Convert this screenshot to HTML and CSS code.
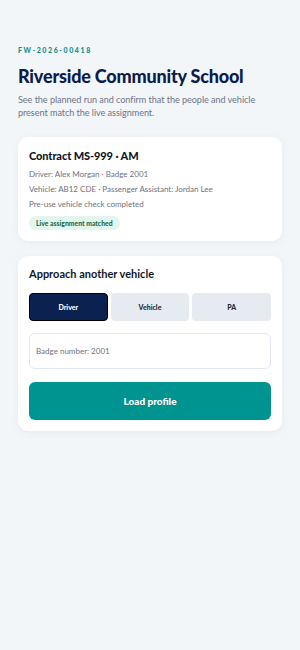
FILE: index.html
```html
<!DOCTYPE html>
<html lang="en">

<head>
    <meta charset="UTF-8">
    <meta name="viewport" content="width=device-width, initial-scale=1.0">
    <title>Vehicle check</title>
    <link rel="stylesheet" href="styles.css">
</head>

<body>
    <main class="page">
        <header class="page_head">
            <p class="ref">FW-2026-00418</p>
            <h1>Riverside Community School</h1>
            <p class="intro">See the planned run and confirm that the people and vehicle present match the live assignment.</p>
        </header>

        <section class="card run">
            <h2>Contract MS-999 · AM</h2>
            <p>Driver: Alex Morgan · Badge 2001</p>
            <p>Vehicle: AB12 CDE · Passenger Assistant: Jordan Lee</p>
            <p>Pre-use vehicle check completed</p>
            <span class="tag">Live assignment matched</span>
        </section><!-- .run end -->

        <section class="card approach">
            <h3>Approach another vehicle</h3>
            <div class="seg">
                <button class="on">Driver</button>
                <button>Vehicle</button>
                <button>PA</button>
            </div>
            <input class="field" type="text" placeholder="Badge number: 2001">
            <button class="load">Load profile</button>
        </section><!-- .approach end -->
    </main>
</body>

</html>
```
FILE: styles.css
```css
* {
    margin: 0;
    padding: 0;
    box-sizing: border-box;
}

body {
    background-color: #f3f6f9;
    font-family: "Lato", "Open Sans", sans-serif;
    color: #0c1d4a;
}

.page {
    padding: 45px 18px 40px;
}

.page_head .ref {
    font-size: 7px;
    font-weight: 900;
    letter-spacing: 1.6px;
    color: #0e8f8a;
    line-height: 10px;
}

.page_head h1 {
    margin-top: 9px;
    font-size: 18px;
    line-height: 24px;
    font-weight: 900;
    letter-spacing: -0.2px;
    color: #0c1d4a;
}

.page_head .intro {
    max-width: 248px;
    margin-top: 6px;
    font-size: 9.1px;
    line-height: 12.5px;
    letter-spacing: -0.05px;
    color: #6b7588;
}

.card {
    background-color: #fff;
    border-radius: 10px;
    box-shadow: 0 2px 8px rgba(20, 40, 80, .06);
    padding: 11px;
}

.run {
    margin-top: 18px;
}

.run h2 {
    font-size: 11px;
    line-height: 16px;
    font-weight: 900;
    letter-spacing: -0.1px;
    color: #111827;
    margin-bottom: 3px;
}

.run p {
    font-size: 8px;
    line-height: 15px;
    color: #6b7280;
}

.run .tag {
    display: table;
    margin-top: 4px;
    padding: 3px 7px;
    border-radius: 10px;
    background-color: #e3f6ee;
    color: #1d6b45;
    font-size: 6.8px;
    line-height: 8px;
    font-weight: 900;
}

.approach {
    margin-top: 15px;
    padding-top: 11px;
}

.approach h3 {
    font-size: 11px;
    line-height: 14px;
    font-weight: 700;
    color: #111827;
}

.seg {
    margin-top: 12px;
    display: grid;
    grid-template-columns: repeat(3, 1fr);
    gap: 3px;
}

.seg button {
    height: 28px;
    border: 0;
    border-radius: 4px;
    background-color: #e6ebf2;
    font-family: inherit;
    font-size: 7px;
    font-weight: 900;
    color: #1f2937;
}

.seg button.on {
    background-color: #0b2150;
    color: #fff;
    border: 1px solid #000;
}

.field {
    display: block;
    width: 100%;
    margin-top: 12px;
    height: 36px;
    border: 1px solid #e2e6ee;
    border-radius: 6px;
    padding: 0 6px;
    font-family: inherit;
    font-size: 8px;
    color: #374151;
}

.field::placeholder {
    color: #6b7280;
}

.load {
    display: block;
    width: 100%;
    margin-top: 13px;
    height: 38px;
    border: 0;
    border-radius: 6px;
    background-color: #009490;
    color: #fff;
    font-family: inherit;
    font-size: 10px;
    font-weight: 900;
}
```
